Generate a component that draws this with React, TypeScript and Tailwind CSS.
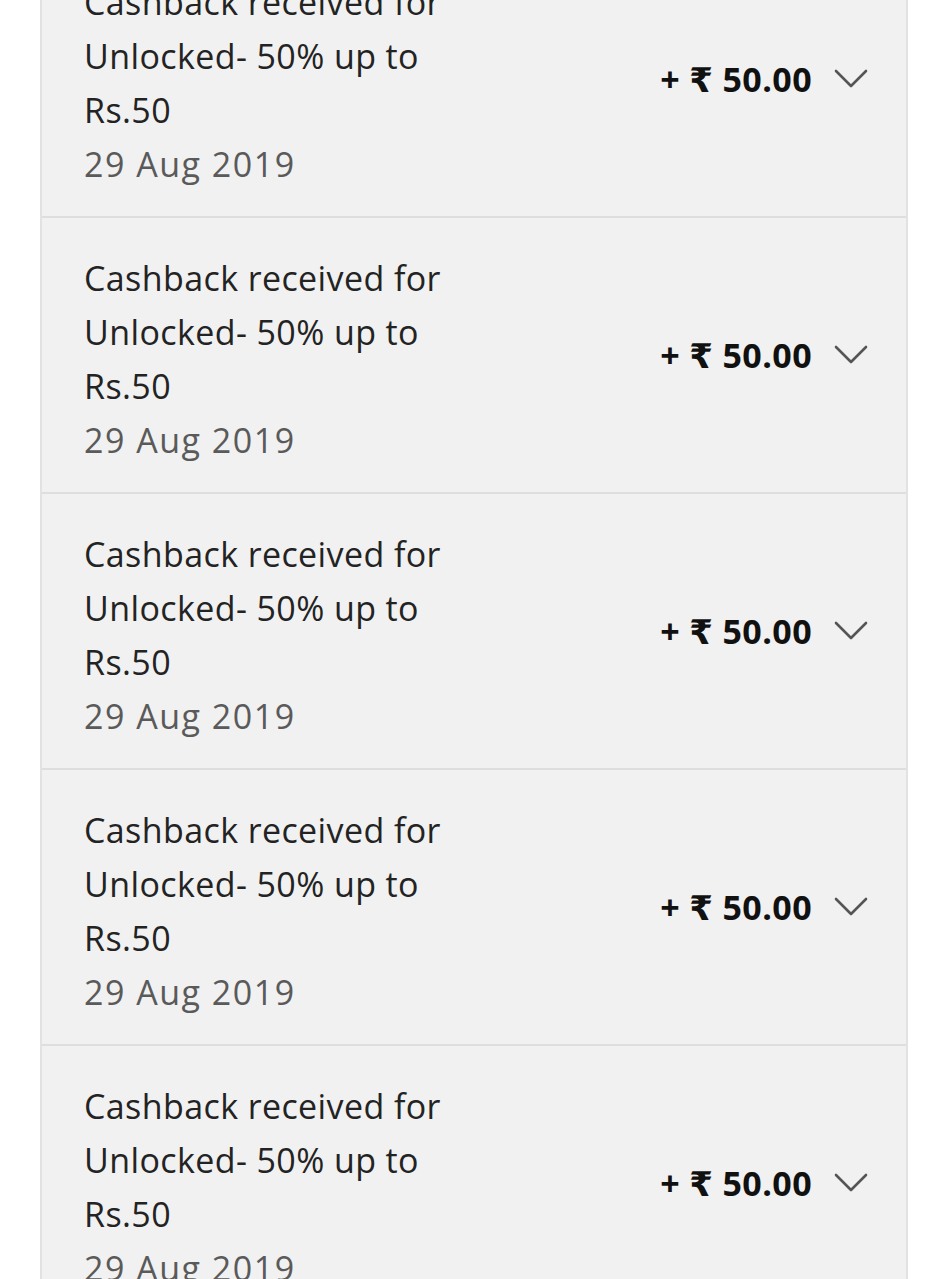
import React from "react";

const rows = Array.from({ length: 5 }, () => ({
  title: ["Cashback received for", "Unlocked- 50% up to", "Rs.50"],
  date: "29 Aug 2019",
  amount: "50.00",
}));

function Chevron() {
  return (
    <svg width="34" height="20" viewBox="0 0 34 20" fill="none" className="text-[#555]">
      <path d="M2 2 L17 17 L32 2" stroke="currentColor" strokeWidth="2.6" strokeLinecap="round" strokeLinejoin="round" />
    </svg>
  );
}

export default function App() {
  return (
    <div className="h-[1279px] overflow-hidden bg-white" style={{ fontFamily: '"Open Sans", "DejaVu Sans", sans-serif' }}>
      <div className="ml-[40px] w-[868px] -mt-[58px] border-x-2 border-[#e2e2e2] bg-[#f1f1f1]">
        {rows.map((r, i) => (
          <div key={i} className="flex h-[276px] items-center border-b-2 border-[#dedede] pl-[42px] pr-[38px]">
            <div className="flex-1 pt-[8px] text-[34px] leading-[54px] tracking-[0.4px] text-[#232323]">
              {r.title.map((t) => (
                <div key={t}>{t}</div>
              ))}
              <div className="tracking-[1.5px] text-[#5a5a5a]">{r.date}</div>
            </div>
            <div className="flex items-center gap-[22px]">
              <span className="text-[34px] font-bold tracking-[0.4px] text-[#111]">+ ₹ {r.amount}</span>
              <Chevron />
            </div>
          </div>
        ))}
      </div>
    </div>
  );
}
